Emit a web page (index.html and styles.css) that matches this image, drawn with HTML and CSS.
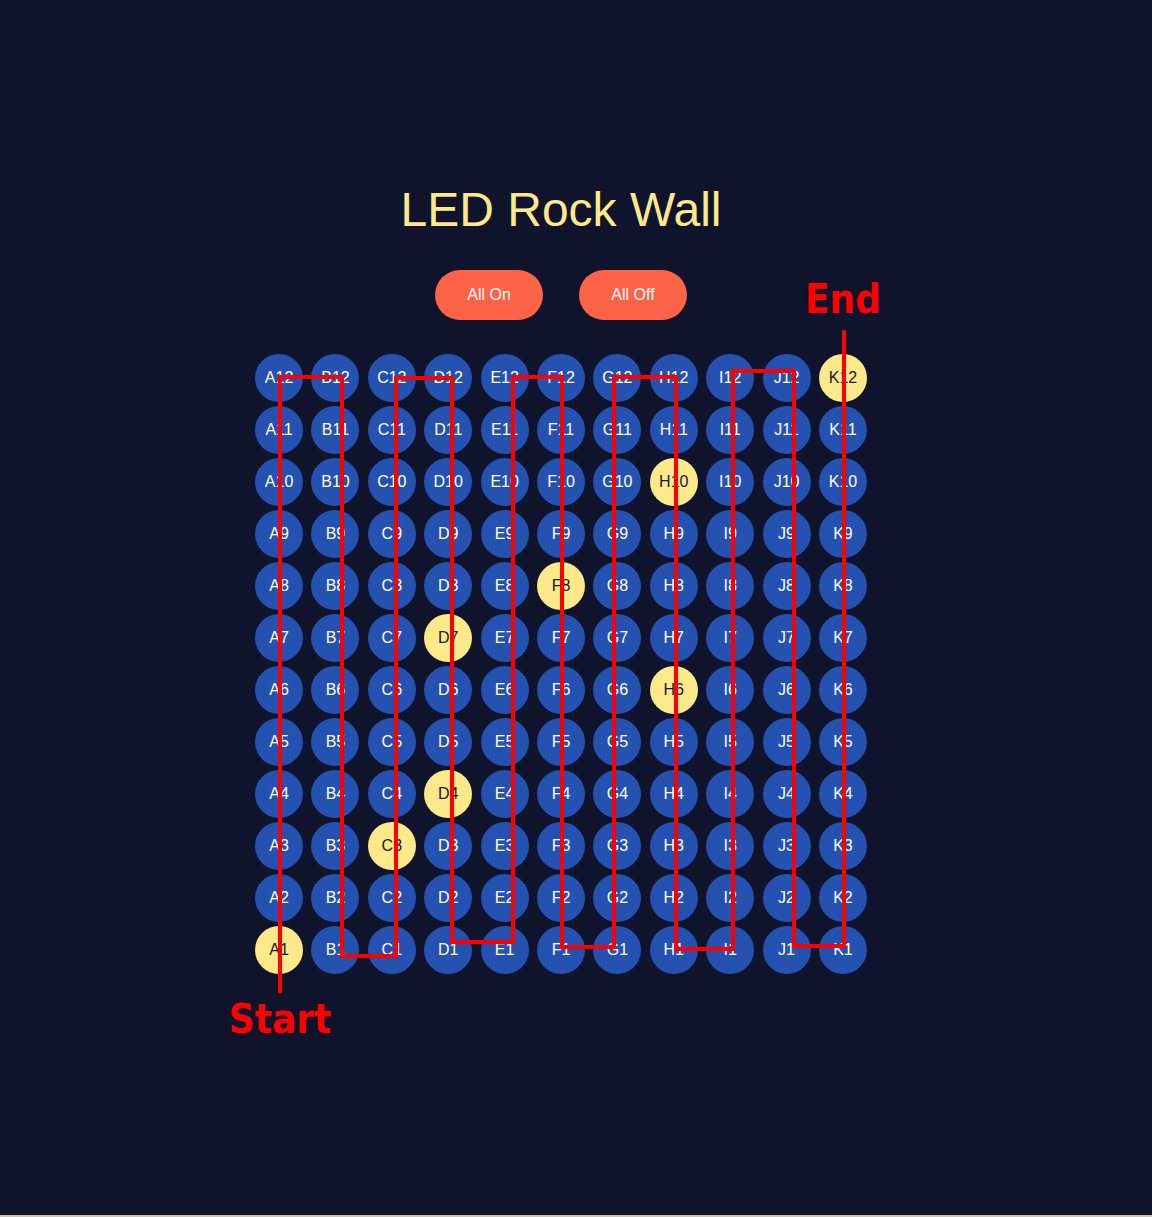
FILE: index.html
```html
<!DOCTYPE html>
<html lang="en">

<head>
    <meta charset="UTF-8">
    <title>LED Rock Wall</title>
    <link rel="stylesheet" href="styles.css">
</head>

<body>
    <div class="page">
        <h1 class="title">LED Rock Wall</h1>
        <div class="controls">
            <button class="btn" type="button">All On</button>
            <button class="btn" type="button">All Off</button>
        </div>
        <div class="wall">
            <div class="grid">
                <div class="led">A12</div><div class="led">B12</div><div class="led">C12</div><div class="led">D12</div><div class="led">E12</div><div class="led">F12</div><div class="led">G12</div><div class="led">H12</div><div class="led">I12</div><div class="led">J12</div><div class="led on">K12</div>
                <div class="led">A11</div><div class="led">B11</div><div class="led">C11</div><div class="led">D11</div><div class="led">E11</div><div class="led">F11</div><div class="led">G11</div><div class="led">H11</div><div class="led">I11</div><div class="led">J11</div><div class="led">K11</div>
                <div class="led">A10</div><div class="led">B10</div><div class="led">C10</div><div class="led">D10</div><div class="led">E10</div><div class="led">F10</div><div class="led">G10</div><div class="led on">H10</div><div class="led">I10</div><div class="led">J10</div><div class="led">K10</div>
                <div class="led">A9</div><div class="led">B9</div><div class="led">C9</div><div class="led">D9</div><div class="led">E9</div><div class="led">F9</div><div class="led">G9</div><div class="led">H9</div><div class="led">I9</div><div class="led">J9</div><div class="led">K9</div>
                <div class="led">A8</div><div class="led">B8</div><div class="led">C8</div><div class="led">D8</div><div class="led">E8</div><div class="led on">F8</div><div class="led">G8</div><div class="led">H8</div><div class="led">I8</div><div class="led">J8</div><div class="led">K8</div>
                <div class="led">A7</div><div class="led">B7</div><div class="led">C7</div><div class="led on">D7</div><div class="led">E7</div><div class="led">F7</div><div class="led">G7</div><div class="led">H7</div><div class="led">I7</div><div class="led">J7</div><div class="led">K7</div>
                <div class="led">A6</div><div class="led">B6</div><div class="led">C6</div><div class="led">D6</div><div class="led">E6</div><div class="led">F6</div><div class="led">G6</div><div class="led on">H6</div><div class="led">I6</div><div class="led">J6</div><div class="led">K6</div>
                <div class="led">A5</div><div class="led">B5</div><div class="led">C5</div><div class="led">D5</div><div class="led">E5</div><div class="led">F5</div><div class="led">G5</div><div class="led">H5</div><div class="led">I5</div><div class="led">J5</div><div class="led">K5</div>
                <div class="led">A4</div><div class="led">B4</div><div class="led">C4</div><div class="led on">D4</div><div class="led">E4</div><div class="led">F4</div><div class="led">G4</div><div class="led">H4</div><div class="led">I4</div><div class="led">J4</div><div class="led">K4</div>
                <div class="led">A3</div><div class="led">B3</div><div class="led on">C3</div><div class="led">D3</div><div class="led">E3</div><div class="led">F3</div><div class="led">G3</div><div class="led">H3</div><div class="led">I3</div><div class="led">J3</div><div class="led">K3</div>
                <div class="led">A2</div><div class="led">B2</div><div class="led">C2</div><div class="led">D2</div><div class="led">E2</div><div class="led">F2</div><div class="led">G2</div><div class="led">H2</div><div class="led">I2</div><div class="led">J2</div><div class="led">K2</div>
                <div class="led on">A1</div><div class="led">B1</div><div class="led">C1</div><div class="led">D1</div><div class="led">E1</div><div class="led">F1</div><div class="led">G1</div><div class="led">H1</div><div class="led">I1</div><div class="led">J1</div><div class="led">K1</div>
            </div>
            <!-- route overlay -->
            <svg class="route" width="612" height="620" viewBox="0 0 612 620">
                <polyline points="25,639 25,23 87,23 87,602 141,602 141,24 197,24 197,588 258,588 258,23 307,23 307,593 359,593 359,23 421,23 421,595 478,595 478,17 539,17 539,592 589,592 589,-24" />
                <text class="label" x="25" y="679">Start</text>
                <text class="label" x="588" y="-41">End</text>
            </svg>
        </div>
    </div>
</body>

</html>
```

FILE: styles.css
```css
* {
    margin: 0;
    padding: 0;
    box-sizing: border-box;
}

html {
    background-color: #cbc7a8;
}

body {
    height: 1215px;
    background-color: #0f132b;
    font-family: "Liberation Sans", Arial, sans-serif;
}

.page {
    width: 1122px;
    padding-top: 182px;
    display: flex;
    flex-direction: column;
    align-items: center;
}

.title {
    font-size: 48px;
    line-height: 56px;
    font-weight: normal;
    color: #fde98a;
}

.controls {
    display: flex;
    gap: 36px;
    margin-top: 32px;
}

.btn {
    width: 108px;
    height: 50px;
    border: none;
    border-radius: 25px;
    background-color: #ff6347;
    color: #fff;
    font-family: "Liberation Sans", Arial, sans-serif;
    font-size: 16px;
}

.wall {
    position: relative;
    margin-top: 34px;
}

.grid {
    display: grid;
    grid-template-columns: repeat(11, 48px);
    column-gap: 8.4px;
    row-gap: 4px;
}

.led {
    width: 48px;
    height: 48px;
    border-radius: 50%;
    background-color: #2552b1;
    color: #fff;
    font-size: 16px;
    display: flex;
    align-items: center;
    justify-content: center;
}

.led.on {
    background-color: #fde98a;
    color: #141a33;
}

.route {
    position: absolute;
    left: 0;
    top: 0;
    overflow: visible;
}

.route polyline {
    fill: none;
    stroke: #ff0000;
    stroke-width: 4;
    stroke-linejoin: miter;
}

.label {
    fill: #ff0000;
    font-family: "DejaVu Sans Condensed", "DejaVu Sans", sans-serif;
    font-stretch: condensed;
    font-weight: bold;
    font-size: 40px;
    text-anchor: middle;
}
```
